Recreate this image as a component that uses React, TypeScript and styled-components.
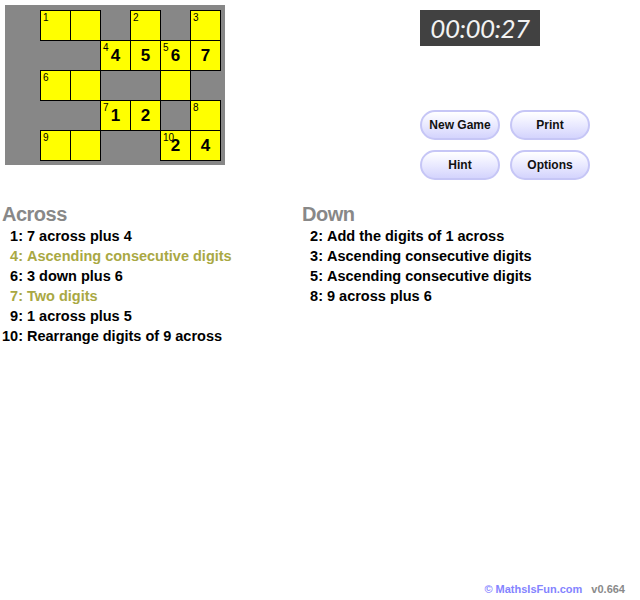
import styled, { createGlobalStyle } from "styled-components";

type Cell = { r: number; c: number; label?: number; value?: number };

const cells: Cell[] = [
  { r: 1, c: 2, label: 1 },
  { r: 1, c: 3 },
  { r: 1, c: 5, label: 2 },
  { r: 1, c: 7, label: 3 },
  { r: 2, c: 4, label: 4, value: 4 },
  { r: 2, c: 5, value: 5 },
  { r: 2, c: 6, label: 5, value: 6 },
  { r: 2, c: 7, value: 7 },
  { r: 3, c: 2, label: 6 },
  { r: 3, c: 3 },
  { r: 3, c: 6 },
  { r: 4, c: 4, label: 7, value: 1 },
  { r: 4, c: 5, value: 2 },
  { r: 4, c: 7, label: 8 },
  { r: 5, c: 2, label: 9 },
  { r: 5, c: 3 },
  { r: 5, c: 6, label: 10, value: 2 },
  { r: 5, c: 7, value: 4 },
];

type Clue = { num: number; text: string; done?: boolean };

const across: Clue[] = [
  { num: 1, text: "7 across plus 4" },
  { num: 4, text: "Ascending consecutive digits", done: true },
  { num: 6, text: "3 down plus 6" },
  { num: 7, text: "Two digits", done: true },
  { num: 9, text: "1 across plus 5" },
  { num: 10, text: "Rearrange digits of 9 across" },
];

const down: Clue[] = [
  { num: 2, text: "Add the digits of 1 across" },
  { num: 3, text: "Ascending consecutive digits" },
  { num: 5, text: "Ascending consecutive digits" },
  { num: 8, text: "9 across plus 6" },
];

const ClueList = ({ title, clues }: { title: string; clues: Clue[] }) => (
  <ClueColumn>
    <ClueTitle>{title}</ClueTitle>
    {clues.map((clue) => (
      <ClueRow key={clue.num} $done={clue.done}>
        <ClueNum>{clue.num}:</ClueNum>
        <span>{clue.text}</span>
      </ClueRow>
    ))}
  </ClueColumn>
);

const App = () => {
  return (
    <Page>
      <GlobalStyle />
      <TopRow>
        <Board>
          {cells.map((cell) => (
            <Square key={`${cell.r}-${cell.c}`} $row={cell.r} $col={cell.c}>
              {cell.label && <SquareLabel>{cell.label}</SquareLabel>}
              {cell.value}
            </Square>
          ))}
        </Board>
        <SidePanel>
          <Timer>00:00:27</Timer>
          <ButtonGrid>
            <PillButton>New Game</PillButton>
            <PillButton>Print</PillButton>
            <PillButton>Hint</PillButton>
            <PillButton>Options</PillButton>
          </ButtonGrid>
        </SidePanel>
      </TopRow>
      <Clues>
        <ClueList title="Across" clues={across} />
        <ClueList title="Down" clues={down} />
      </Clues>
      <Footer>
        <Copyright>© MathsIsFun.com</Copyright>
        <Version>v0.664</Version>
      </Footer>
    </Page>
  );
};

export default App;

const GlobalStyle = createGlobalStyle`
  body {
    margin: 0;
    background: #fff;
    font-family: "Liberation Sans", Arial, sans-serif;
  }
`;

const Page = styled.div`
  display: flex;
  flex-direction: column;
  width: 640px;
  height: 600px;
  box-sizing: border-box;
`;

const TopRow = styled.div`
  display: flex;
  align-items: flex-start;
  padding: 5px 0 0 5px;
`;

const Board = styled.div`
  display: grid;
  grid-template-columns: repeat(7, 30px);
  grid-template-rows: repeat(5, 30px);
  padding: 5px;
  background: #878787;
`;

const Square = styled.div<{ $row: number; $col: number }>`
  grid-row: ${({ $row }) => $row};
  grid-column: ${({ $col }) => $col};
  position: relative;
  width: 31px;
  height: 31px;
  box-sizing: border-box;
  border: 1px solid #000;
  background: #ffff00;
  display: flex;
  align-items: center;
  justify-content: center;
  font-size: 17px;
  font-weight: bold;
  color: #000;
  line-height: 1;
`;

const SquareLabel = styled.span`
  position: absolute;
  top: 2px;
  left: 2px;
  font-size: 10px;
  font-weight: normal;
  line-height: 1;
`;

const SidePanel = styled.div`
  display: flex;
  flex-direction: column;
  margin-left: 195px;
  padding-top: 5px;
`;

const Timer = styled.div`
  width: 120px;
  height: 36px;
  background: #414141;
  color: #f2f2f2;
  font-family: Lato, "DejaVu Sans", sans-serif;
  font-weight: 400;
  font-style: italic;
  font-size: 26px;
  letter-spacing: -0.5px;
  line-height: 36px;
  text-align: center;
`;

const ButtonGrid = styled.div`
  display: grid;
  grid-template-columns: repeat(2, 80px);
  grid-auto-rows: 30px;
  gap: 10px;
  margin-top: 64px;
`;

const PillButton = styled.button`
  box-sizing: border-box;
  width: 80px;
  height: 30px;
  padding: 0;
  border: 2px solid #c6c6f6;
  border-radius: 15px;
  background: linear-gradient(#ffffff 0%, #eeeeff 40%, #d4d4fd 100%);
  font-family: "Liberation Sans", Arial, sans-serif;
  font-size: 12px;
  font-weight: bold;
  color: #111;
  cursor: pointer;
`;

const Clues = styled.div`
  display: grid;
  grid-template-columns: 300px 300px;
  margin-top: 22px;
`;

const ClueColumn = styled.div`
  display: flex;
  flex-direction: column;
`;

const ClueTitle = styled.div`
  padding-left: 2px;
  font-size: 20px;
  font-weight: bold;
  letter-spacing: -0.5px;
  line-height: 24px;
  color: #888;
`;

const ClueRow = styled.div<{ $done?: boolean }>`
  display: grid;
  grid-template-columns: 21px auto;
  column-gap: 4px;
  padding-left: 2px;
  font-size: 14.5px;
  font-weight: bold;
  line-height: 20px;
  color: ${({ $done }) => ($done ? "#a9a843" : "#000")};
`;

const ClueNum = styled.span`
  text-align: right;
`;

const Footer = styled.div`
  display: flex;
  justify-content: flex-end;
  gap: 9px;
  margin-top: auto;
  padding: 0 15px 4px 0;
  font-size: 11px;
  font-weight: bold;
  line-height: 14px;
`;

const Copyright = styled.span`
  color: #8484ff;
`;

const Version = styled.span`
  color: #8a8a8a;
`;
